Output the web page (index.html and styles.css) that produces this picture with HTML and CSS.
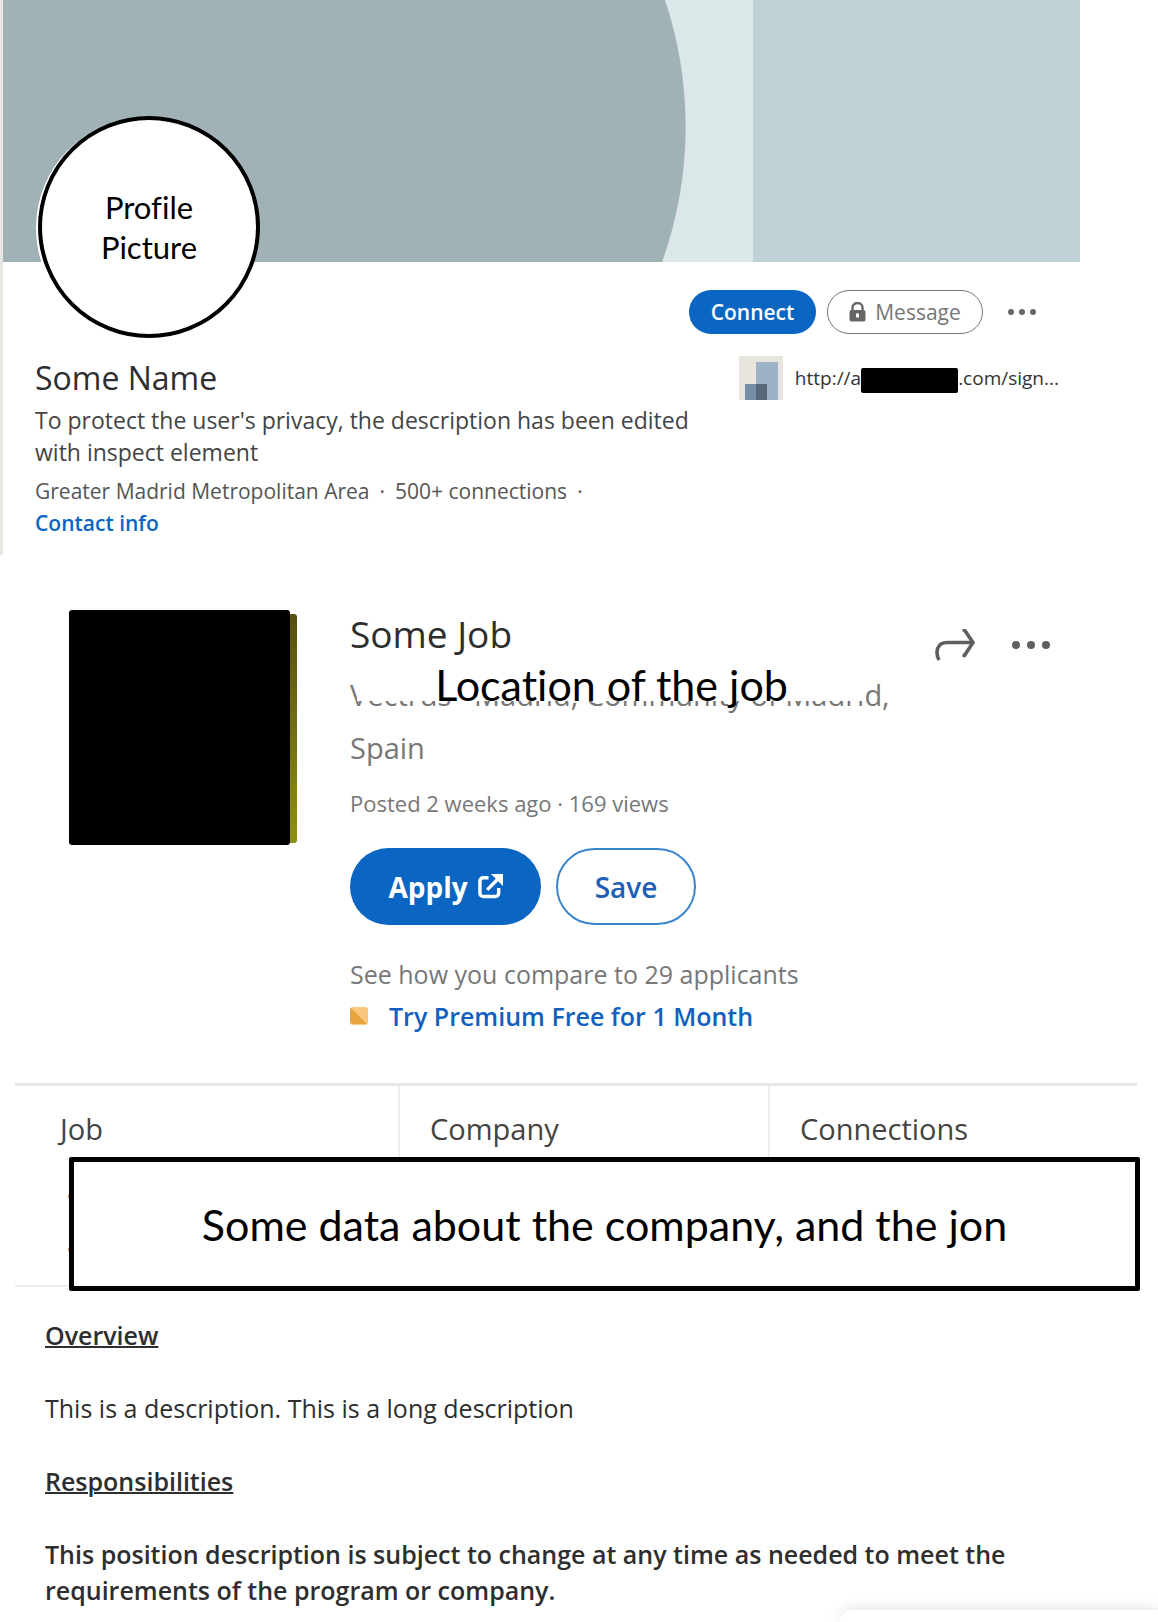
FILE: index.html
```html
<!DOCTYPE html>
<html lang="en">
<head>
<meta charset="utf-8">
<meta name="viewport" content="width=device-width, initial-scale=1">
<title>Some Name</title>
<link rel="stylesheet" href="styles.css">
</head>
<body>
<main class="page">
  <section class="profile">
    <div class="banner">
      <svg class="banner-art" viewBox="0 0 1077 262" preserveAspectRatio="none" aria-hidden="true">
        <rect width="1077" height="262" fill="#dce7e9"/>
        <rect x="750" width="327" height="262" fill="#bfd1d5"/>
        <path d="M0 0H662A400 400 0 0 1 659 262H0Z" fill="#a0b2b6"/>
      </svg>
      <div class="avatar">Profile<br>Picture</div>
    </div>
    <div class="actions">
      <button class="btn btn-connect" type="button">Connect</button>
      <button class="btn btn-message" type="button">
        <svg width="17" height="20" viewBox="0 0 17 20" aria-hidden="true">
          <path d="M3.500 9V5.500a5 4.500 0 0 1 10 0V9" fill="none" stroke="#666" stroke-width="2.400"/>
          <path fill-rule="evenodd" fill="#666" d="M2.500 8h12A2 2 0 0 1 16.500 10v7.500a2 2 0 0 1-2 2h-12a2 2 0 0 1-2-2V10a2 2 0 0 1 2-2zM7 11.500v4h3v-4z"/>
        </svg>
        Message
      </button>
      <button class="more" type="button" aria-label="More actions">
        <svg width="30" height="8" viewBox="0 0 30 8" fill="#666" aria-hidden="true"><circle cx="4" cy="4" r="3"/><circle cx="15" cy="4" r="3"/><circle cx="26" cy="4" r="3"/></svg>
      </button>
    </div>
    <div class="details">
      <div class="person">
        <h1 class="name">Some Name</h1>
        <p class="headline">To protect the user's privacy, the description has been edited with inspect element</p>
        <p class="place"><span>Greater Madrid Metropolitan Area</span><span>·</span><span>500+ connections</span><span>·</span></p>
        <a class="contact" href="#contact">Contact info</a>
      </div>
      <a class="site" href="#site">
        <svg width="44" height="44" viewBox="0 0 44 44" aria-hidden="true">
          <rect width="44" height="44" fill="#e8e4de"/>
          <rect x="17" y="6" width="22" height="38" fill="#9db1c8"/>
          <rect x="6" y="28" width="22" height="16" fill="#778da5"/>
          <rect x="17" y="28" width="11" height="16" fill="#56687a"/>
        </svg>
        <span class="site-url">http://a<span class="redacted"></span>.com/sign...</span>
      </a>
    </div>
  </section>

  <section class="job">
    <div class="job-logo"></div>
    <div class="job-info">
      <h2 class="job-title">Some Job</h2>
      <div class="job-place">
        <p>Vectrus · Madrid, Community of Madrid, Spain</p>
        <div class="place-cover">Location of the job</div>
      </div>
      <p class="posted">Posted 2 weeks ago · 169 views</p>
      <div class="job-actions">
        <button class="btn-job btn-apply" type="button">Apply
          <svg width="25" height="25" viewBox="0 0 26 26" aria-hidden="true">
            <path d="M11 4H5.500A3.500 3.500 0 0 0 2 7.500V20a3.500 3.500 0 0 0 3.500 3.500H18A3.500 3.500 0 0 0 21.500 20V14.500" fill="none" stroke="#fff" stroke-width="3.600"/>
            <path d="M9.500 16.500 21 5" fill="none" stroke="#fff" stroke-width="3.600"/>
            <path d="M13.500 0H26V12.500Z" fill="#fff"/>
          </svg>
        </button>
        <button class="btn-job btn-save" type="button">Save</button>
      </div>
      <p class="compare">See how you compare to 29 applicants</p>
      <a class="premium" href="#premium">
        <svg width="18" height="18" viewBox="0 0 18 18" aria-hidden="true"><rect width="18" height="18" rx="3" fill="#f8c77e"/><path d="M1 1 17 17H3a3 3 0 0 1-3-3V3Q0 1.500 1 1Z" fill="#e7a33e"/></svg>
        Try Premium Free for 1 Month
      </a>
    </div>
    <div class="job-tools">
      <button class="tool" type="button" aria-label="Share">
        <svg width="40" height="32" viewBox="0 0 40 32" fill="none" stroke="#5f5f5f" stroke-width="3.600" aria-hidden="true"><path d="M4 31C-.5 22 3 13.500 12 13.500H37"/><path d="M27.500 1H29.500L38 13.500 29.500 26.500H27.500"/></svg>
      </button>
      <button class="tool" type="button" aria-label="More options">
        <svg width="40" height="8" viewBox="0 0 40 8" fill="#5f5f5f" aria-hidden="true"><circle cx="5" cy="4" r="4"/><circle cx="20" cy="4" r="4"/><circle cx="35" cy="4" r="4"/></svg>
      </button>
    </div>
  </section>

  <section class="facts">
    <h3 class="fact">Job</h3>
    <h3 class="fact">Company</h3>
    <h3 class="fact">Connections</h3>
    <div class="facts-cover">Some data about the company, and the jon</div>
  </section>

  <article class="description">
    <h4 class="underlined">Overview</h4>
    <p>This is a description. This is a long description</p>
    <h4 class="underlined">Responsibilities</h4>
    <p class="strong">This position description is subject to change at any time as needed to meet the requirements of the program or company.</p>
  </article>
</main>
<div class="chat-dock"></div>
</body>
</html>
```
FILE: styles.css
```css
* {
  box-sizing: border-box;
}

body {
  margin: 0;
  background: #fff;
  color: #2e2e2e;
  font-family: "Open Sans", "Noto Sans", sans-serif;
  font-size: 23px;
}

h1, h2, h3, h4, p {
  margin: 0;
  font-weight: 400;
}

a {
  text-decoration: none;
}

button {
  padding: 0;
  border: 0;
  background: none;
  font-family: inherit;
  cursor: pointer;
}

svg {
  display: block;
  flex: none;
}

/* Profile card */
.profile {
  margin-right: 78px;
  padding-bottom: 16px;
  border-left: 3px solid #e8e8e2;
}

.banner {
  position: relative;
  height: 262px;
}

.banner-art {
  width: 100%;
  height: 100%;
}

.avatar {
  position: absolute;
  left: 35px;
  top: 116px;
  display: flex;
  align-items: center;
  justify-content: center;
  width: 222px;
  height: 222px;
  border: 4px solid #000;
  border-radius: 50%;
  background: #fff;
  box-shadow: -2px 1px 0 #fff;
  color: #000;
  font-family: Lato, sans-serif;
  font-size: 31px;
  font-variant-ligatures: none;
  line-height: 40px;
  text-align: center;
}

.actions {
  display: flex;
  justify-content: flex-end;
  gap: 11px;
  padding: 28px 30px 22px 0;
}

.btn {
  display: flex;
  align-items: center;
  justify-content: center;
  height: 44px;
  border-radius: 22px;
  font-size: 21px;
}

.btn-connect {
  width: 127px;
  background: #0a66c2;
  color: #fff;
  font-weight: 600;
}

.btn-message {
  gap: 9px;
  width: 156px;
  border: 1px solid #777;
  color: #777;
}

.more {
  display: flex;
  align-items: center;
  justify-content: center;
  width: 56px;
}

.details {
  display: flex;
  justify-content: space-between;
  padding: 0 21px 0 32px;
}

.person {
  width: 680px;
}

.name {
  margin-bottom: 4px;
  font-size: 32px;
  line-height: 44px;
}

.headline {
  margin-bottom: 7px;
  color: #444;
  line-height: 32px;
}

.place {
  display: flex;
  gap: 10px;
  color: #555;
  font-size: 21px;
  line-height: 32px;
}

.contact {
  display: block;
  color: #0a66c2;
  font-size: 21px;
  font-weight: 600;
  line-height: 32px;
}

.site {
  display: flex;
  align-items: center;
  gap: 12px;
  height: 44px;
  color: #333;
  font-size: 19px;
}

.site-url {
  display: flex;
  align-items: center;
}

.redacted {
  width: 97px;
  height: 25px;
  margin-top: 4px;
  border-radius: 2px;
  background: #000;
}

/* Job card */
.job {
  display: flex;
  padding: 55px 107px 46px 69px;
}

.job-logo {
  position: relative;
  flex: none;
  width: 221px;
  height: 235px;
  margin-right: 60px;
  border-radius: 3px;
  background: #000;
}

.job-logo::after {
  content: "";
  position: absolute;
  left: 100%;
  top: 4px;
  bottom: 2px;
  width: 7px;
  border-radius: 0 3px 3px 0;
  background: linear-gradient(#55500f, #8f8f12);
}

.job-info {
  flex: 1;
}

.job-title {
  margin-bottom: 10px;
  font-size: 37px;
  line-height: 48px;
}

.job-place {
  position: relative;
  max-width: 550px;
  margin-bottom: 13px;
  color: #777;
  font-size: 29px;
  line-height: 53px;
}

.place-cover {
  position: absolute;
  left: 7px;
  right: 34px;
  top: -7px;
  height: 40px;
  background: #fff;
  color: #000;
  font-family: Lato, sans-serif;
  font-size: 43px;
  font-variant-ligatures: none;
  line-height: 48px;
  text-align: center;
}

.posted {
  color: #777;
  font-size: 22px;
  line-height: 32px;
}

.job-actions {
  display: flex;
  gap: 15px;
  margin: 29px 0 28px;
}

.btn-job {
  display: flex;
  align-items: center;
  justify-content: center;
  height: 77px;
  border-radius: 39px;
  font-size: 28px;
  font-weight: 600;
}

.btn-apply {
  gap: 10px;
  width: 191px;
  background: #0a66c2;
  color: #fff;
  font-weight: 700;
}

.btn-save {
  width: 140px;
  border: 2px solid #3b84cf;
  color: #1f5fb8;
}

.compare {
  color: #777;
  font-size: 25px;
  line-height: 42px;
}

.premium {
  display: flex;
  align-items: center;
  gap: 21px;
  color: #1260bd;
  font-size: 25px;
  font-weight: 600;
  line-height: 42px;
}

.job-tools {
  display: flex;
  gap: 36px;
  height: 70px;
}

.tool {
  display: flex;
  align-items: center;
}

/* Job, company and connection facts */
.facts {
  position: relative;
  display: grid;
  grid-template-columns: 383fr 370fr 369fr;
  height: 204px;
  margin: 0 21px 0 15px;
  border-top: 3px solid #e8e8e8;
  border-bottom: 2px solid #ededed;
}

.fact {
  padding: 23px 0 0 30px;
  border-left: 2px solid #ededed;
  color: #444;
  font-size: 29px;
  line-height: 40px;
}

.fact:first-child {
  padding-left: 45px;
  border-left: 0;
}

/* Bullet icons whose edges show beside the panel */
.fact:first-child::before,
.fact:first-child::after {
  content: "";
  position: absolute;
  left: 53px;
  top: 108px;
  width: 4px;
  height: 5px;
  border-radius: 2px;
  background: #d98a45;
}

.fact:first-child::after {
  top: 161px;
}

.facts-cover {
  position: absolute;
  left: 54px;
  right: -3px;
  top: 71px;
  display: flex;
  align-items: center;
  justify-content: center;
  height: 134px;
  border: 5px solid #000;
  border-radius: 2px;
  background: #fff;
  color: #000;
  font-family: Lato, sans-serif;
  font-size: 43px;
  font-variant-ligatures: none;
}

/* Description */
.description {
  display: grid;
  gap: 37px;
  padding: 30px 120px 0 45px;
  font-size: 25px;
  line-height: 36px;
}

.underlined {
  font-weight: 600;
  text-decoration: underline;
  text-decoration-thickness: 2px;
}

.strong {
  font-weight: 600;
}

/* Collapsed chat panel at the window's lower right */
.chat-dock {
  position: fixed;
  right: 0;
  bottom: 0;
  width: 318px;
  height: 12px;
  border-radius: 14px 0 0 0;
  background: #fff;
  box-shadow: 0 0 14px rgba(0, 0, 0, 0.15);
}
```
